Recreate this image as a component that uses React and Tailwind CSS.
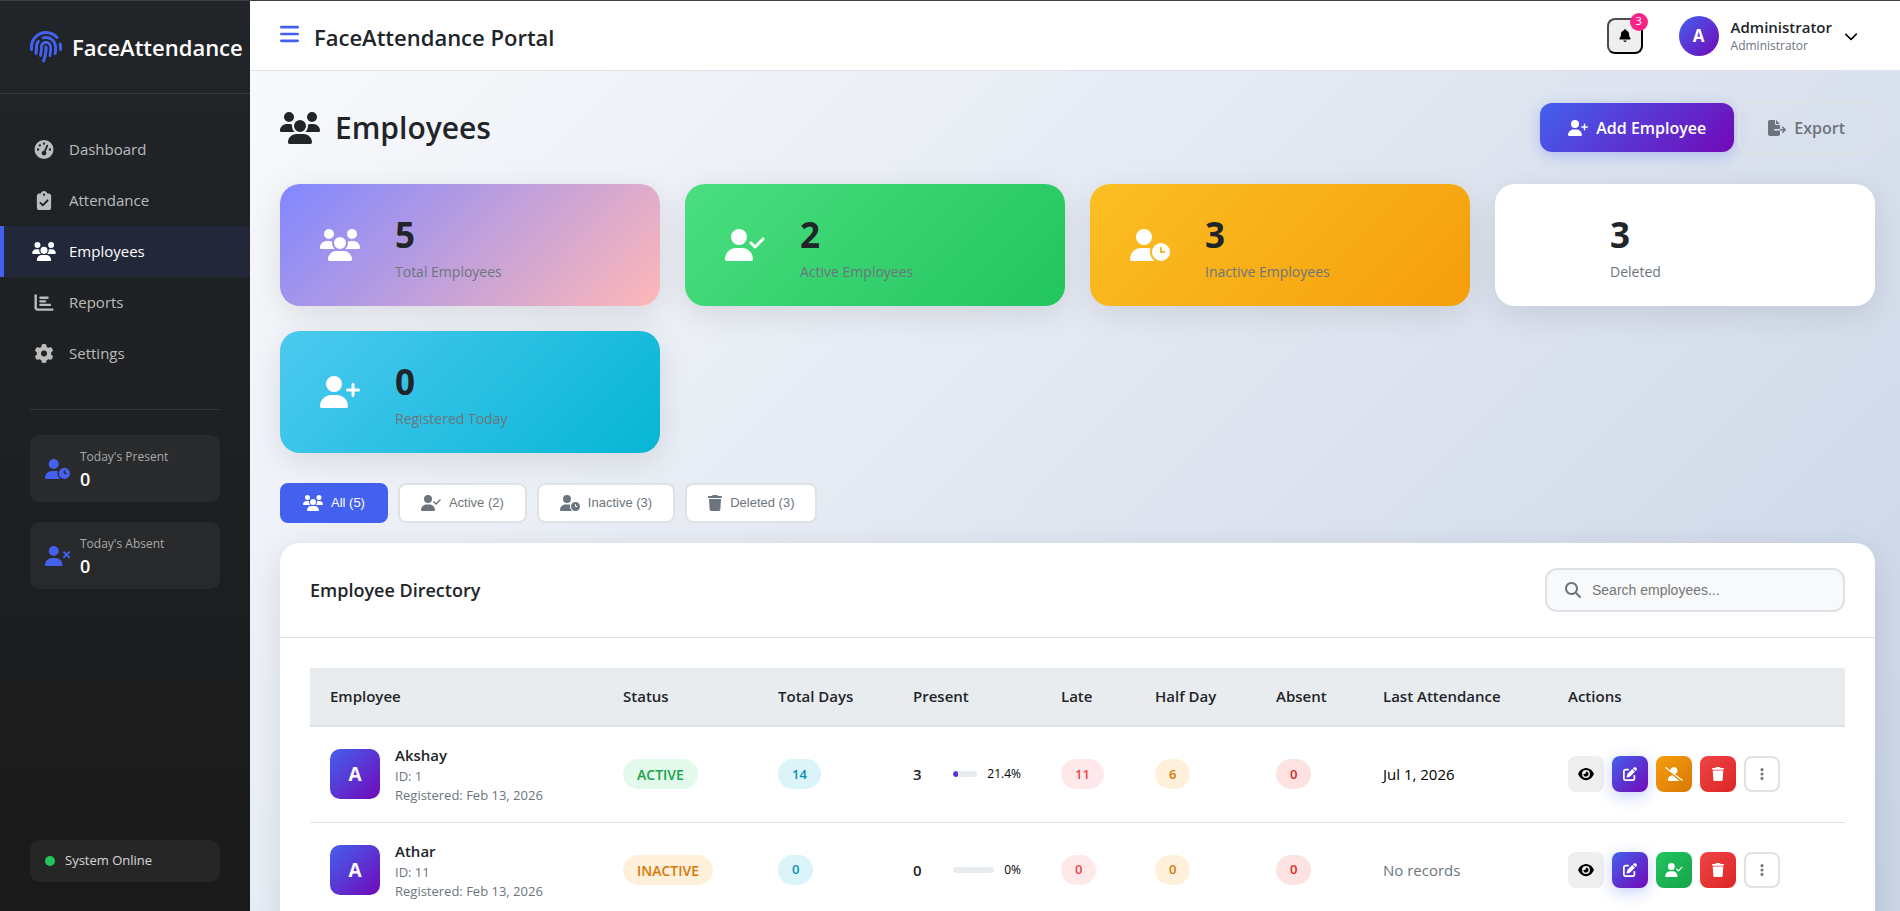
import React from 'react';
import {
  FaBars, FaBell, FaChartBar, FaChevronDown, FaClipboardCheck, FaEllipsisVertical, FaEye,
  FaFileExport, FaFingerprint, FaGaugeHigh, FaGear, FaMagnifyingGlass, FaPenToSquare, FaTrash,
  FaUserCheck, FaUserClock, FaUserPlus, FaUsers, FaUserSlash, FaUserXmark,
} from 'react-icons/fa6';

const navItems = [
  { label: 'Dashboard', Icon: FaGaugeHigh },
  { label: 'Attendance', Icon: FaClipboardCheck },
  { label: 'Employees', Icon: FaUsers, active: true },
  { label: 'Reports', Icon: FaChartBar },
  { label: 'Settings', Icon: FaGear },
];

const sideStats = [
  { label: "Today's Present", value: 0, Icon: FaUserClock },
  { label: "Today's Absent", value: 0, Icon: FaUserXmark },
];

const cards = [
  { label: 'Total Employees', value: 5, Icon: FaUsers, bg: 'bg-[linear-gradient(135deg,#8187ff,#ffb8b8)]' },
  { label: 'Active Employees', value: 2, Icon: FaUserCheck, bg: 'bg-[linear-gradient(135deg,#4ade80,#22c55e)]' },
  { label: 'Inactive Employees', value: 3, Icon: FaUserClock, bg: 'bg-[linear-gradient(135deg,#fbbf24,#f59e0b)]' },
  { label: 'Deleted', value: 3, Icon: FaTrash, bg: 'bg-white' },
  { label: 'Registered Today', value: 0, Icon: FaUserPlus, bg: 'bg-[linear-gradient(135deg,#4cc9f0,#06b6d4)]' },
];

const tabs = [
  { label: 'All (5)', Icon: FaUsers, size: 'h-4 w-5', active: true },
  { label: 'Active (2)', Icon: FaUserCheck, size: 'h-4 w-5' },
  { label: 'Inactive (3)', Icon: FaUserClock, size: 'h-4 w-5' },
  { label: 'Deleted (3)', Icon: FaTrash, size: 'h-4 w-[14px]' },
];

const columns = [
  { label: 'Employee', width: 'w-[293px]' },
  { label: 'Status', width: 'w-[155px]' },
  { label: 'Total Days', width: 'w-[135px]' },
  { label: 'Present', width: 'w-[148px]' },
  { label: 'Late', width: 'w-[94px]' },
  { label: 'Half Day', width: 'w-[121px]' },
  { label: 'Absent', width: 'w-[107px]' },
  { label: 'Last Attendance', width: 'w-[185px]' },
  { label: 'Actions', width: 'w-auto' },
];

const employees = [
  { name: 'Akshay', id: 1, registered: 'Feb 13, 2026', active: true, total: 14, present: 3, rate: 21.4, late: 11, half: 6, absent: 0, last: 'Jul 1, 2026' },
  { name: 'Athar', id: 11, registered: 'Feb 13, 2026', active: false, total: 0, present: 0, rate: 0, late: 0, half: 0, absent: 0, last: null },
];

function Sidebar() {
  return (
    <aside className="flex w-[250px] shrink-0 flex-col bg-linear-to-b from-[#212529] to-[#1a1a1a] text-white">
      <div className="flex h-[93px] shrink-0 items-center gap-[10px] border-b border-white/10 px-[30px]">
        <FaFingerprint className="size-8 shrink-0 text-[#4361ee]" />
        <span className="text-[22px] font-semibold whitespace-nowrap">FaceAttendance</span>
      </div>
      <nav className="flex flex-col py-[30px]">
        {navItems.map(({ label, Icon, active }) => (
          <a
            key={label}
            href="#"
            className={`flex h-[51px] items-center gap-[13px] border-l-4 pl-[28px] text-[15px] ${
              active ? 'border-[#4361ee] bg-[#4361ee]/10 text-white' : 'border-transparent text-white/70'
            }`}
          >
            <Icon className="h-[19px] w-6" />
            {label}
          </a>
        ))}
      </nav>
      <div className="mx-[30px] flex flex-col gap-5 border-t border-white/10 pt-[25px]">
        {sideStats.map(({ label, value, Icon }) => (
          <div key={label} className="flex h-[67px] items-center gap-[10px] rounded-[10px] bg-white/5 px-[15px]">
            <Icon className="h-5 w-[25px] shrink-0 text-[#4361ee]" />
            <div>
              <div className="text-[12px] leading-5 text-white/60">{label}</div>
              <div className="text-[18px] leading-6 font-semibold">{value}</div>
            </div>
          </div>
        ))}
      </div>
      <div className="mx-[30px] mt-auto mb-[29px] flex h-[42px] items-center gap-[10px] rounded-[10px] bg-white/5 px-[15px]">
        <span className="size-[10px] rounded-full bg-[#22c55e]" />
        <span className="text-[13px] text-white/80">System Online</span>
      </div>
    </aside>
  );
}

function Header() {
  return (
    <header className="flex h-[70px] shrink-0 items-center border-b border-[#dee2e6] bg-white pr-[42px] pl-[30px]">
      <div className="flex items-center gap-[15px] pt-1">
        <button type="button" aria-label="Toggle sidebar" className="pb-2 text-[#4361ee]">
          <FaBars className="h-[22px] w-[19px]" />
        </button>
        <span className="text-[22px] font-semibold">FaceAttendance Portal</span>
      </div>
      <button
        type="button"
        aria-label="Notifications, 3 unread"
        className="relative ml-auto flex size-9 items-center justify-center rounded-lg border-2 border-t-[#4c4c4c] border-r-black border-b-black border-l-[#4c4c4c] bg-[#efefef] text-black"
      >
        <FaBell className="h-[13px] w-3" />
        <span className="absolute -top-[7px] -right-[7px] flex size-[18px] items-center justify-center rounded-full bg-[#f72585] text-[11px] text-white">
          3
        </span>
      </button>
      <button type="button" className="ml-9 flex items-center gap-3 text-left">
        <span className="flex size-10 items-center justify-center rounded-full bg-[linear-gradient(135deg,#4361ee,#7209b7)] text-[17px] font-bold text-white">
          A
        </span>
        <span className="flex flex-col">
          <span className="text-[15px] leading-5 font-semibold">Administrator</span>
          <span className="text-[12px] leading-[18px] text-[#6c757d]">Administrator</span>
        </span>
        <FaChevronDown className="h-4 w-[14px] text-black" />
      </button>
    </header>
  );
}

function StatCard({ label, value, Icon, bg }) {
  return (
    <div className={`flex h-[122px] items-center gap-[25px] rounded-[20px] px-[30px] shadow-[0_8px_32px_rgba(0,0,0,0.1)] ${bg}`}>
      <span className="flex w-[60px] justify-center">
        <Icon className="h-8 w-10 text-white" />
      </span>
      <div className="pt-[10px]">
        <div className="text-[35px] leading-[42px] font-bold">{value}</div>
        <div className="mt-0.5 text-[14px] leading-7 text-[#6c757d]">{label}</div>
      </div>
    </div>
  );
}

function Pill({ className, children }) {
  return (
    <span className={`inline-flex h-[30px] items-center rounded-full px-[14px] font-semibold ${className}`}>
      {children}
    </span>
  );
}

function ActionButton({ label, Icon, size = 'size-[14px]', className }) {
  return (
    <button type="button" aria-label={label} className={`flex size-9 items-center justify-center rounded-lg ${className}`}>
      <Icon className={size} />
    </button>
  );
}

function EmployeeRow({ e }) {
  return (
    <tr className="h-24 border-b border-[#dee2e6]">
      <td className="px-5">
        <div className="flex items-center gap-[15px]">
          <span className="flex size-[50px] shrink-0 items-center justify-center rounded-[10px] bg-[linear-gradient(135deg,#4361ee,#7209b7)] text-[19px] font-bold text-white">
            {e.name[0]}
          </span>
          <div>
            <div className="text-[15px] leading-[22px] font-semibold">{e.name}</div>
            <div className="text-[13px] leading-5 text-[#6c757d]">ID: {e.id}</div>
            <div className="text-[13px] leading-[18px] text-[#6c757d]">Registered: {e.registered}</div>
          </div>
        </div>
      </td>
      <td className="px-5">
        {e.active ? (
          <Pill className="bg-[#e3f9eb] text-[14px] text-[#16a34a]">ACTIVE</Pill>
        ) : (
          <Pill className="bg-[#fef0da] text-[14px] text-[#d97706]">INACTIVE</Pill>
        )}
      </td>
      <td className="px-5"><Pill className="bg-[#daf4f9] text-[13px] text-[#0891b2]">{e.total}</Pill></td>
      <td className="px-5">
        <div className="flex items-center gap-[10px]">
          <span className="w-[30px] shrink-0 text-[15px] font-semibold">{e.present}</span>
          <span className="h-[6px] flex-1 overflow-hidden rounded-full bg-[#e9ecef]">
            <span
              className="block h-full rounded-full bg-[linear-gradient(135deg,#4361ee,#7209b7)]"
              style={{ width: `${e.rate}%` }}
            />
          </span>
          <span className="text-[12px] text-black">{e.rate}%</span>
        </div>
      </td>
      <td className="px-5"><Pill className="bg-[#fee8ea] text-[13px] text-[#ef4444]">{e.late}</Pill></td>
      <td className="px-5"><Pill className="bg-[#fef0da] text-[13px] text-[#d97706]">{e.half}</Pill></td>
      <td className="px-5"><Pill className="bg-[#fde2e2] text-[13px] text-[#dc2626]">{e.absent}</Pill></td>
      <td className={`px-5 text-[15px] ${e.last ? 'text-black' : 'text-[#6c757d]'}`}>{e.last || 'No records'}</td>
      <td className="px-5">
        <div className="flex gap-2">
          <ActionButton label="View" Icon={FaEye} size="h-[14px] w-4" className="bg-[#efefef] text-black" />
          <ActionButton label="Edit" Icon={FaPenToSquare} className="bg-[linear-gradient(135deg,#4361ee,#7209b7)] text-white shadow-[0_4px_15px_rgba(67,97,238,0.3)]" />
          {e.active ? (
            <ActionButton label="Deactivate" Icon={FaUserSlash} size="h-[14px] w-[18px]" className="bg-[linear-gradient(135deg,#f59e0b,#d97706)] text-white" />
          ) : (
            <ActionButton label="Activate" Icon={FaUserCheck} size="h-[14px] w-[18px]" className="bg-[linear-gradient(135deg,#22c55e,#16a34a)] text-white" />
          )}
          <ActionButton label="Delete" Icon={FaTrash} className="bg-[linear-gradient(135deg,#ef4444,#dc2626)] text-white" />
          <ActionButton label="More" Icon={FaEllipsisVertical} className="border-2 border-[#dee2e6] bg-white text-[#6c757d]" />
        </div>
      </td>
    </tr>
  );
}

function Directory() {
  return (
    <section className="mt-5 rounded-[20px] bg-white shadow-[0_8px_32px_rgba(0,0,0,0.1)]">
      <div className="flex items-center justify-between border-b border-[#dee2e6] px-[30px] py-[25px]">
        <h2 className="text-[18px] font-semibold">Employee Directory</h2>
        <label className="flex h-11 w-[300px] items-center gap-[11px] rounded-xl border-2 border-[#dee2e6] bg-[#f8f9fa] px-[18px]">
          <FaMagnifyingGlass className="size-4 shrink-0 text-[#6c757d]" />
          <input
            type="text"
            aria-label="Search employees"
            placeholder="Search employees..."
            className="w-full bg-transparent font-['Liberation_Sans',Arial,sans-serif] text-[14px] outline-none placeholder:text-[#757575]"
          />
        </label>
      </div>
      <div className="p-[30px]">
        <table className="w-full table-fixed border-collapse text-left">
          <thead>
            <tr className="h-[58px] border-b-2 border-[#dee2e6] bg-[#e9ecef]">
              {columns.map((c) => (
                <th key={c.label} scope="col" className={`px-5 text-[15px] font-semibold ${c.width}`}>{c.label}</th>
              ))}
            </tr>
          </thead>
          <tbody>
            {employees.map((e) => <EmployeeRow key={e.id} e={e} />)}
          </tbody>
        </table>
      </div>
    </section>
  );
}

export default function App() {
  return (
    <div className="flex h-screen border-t border-[#3c3f41] font-['Open_Sans','Noto_Sans',sans-serif] text-[#212529]">
      <Sidebar />
      <div className="flex min-w-0 flex-1 flex-col">
        <Header />
        <main className="flex-1 overflow-y-auto bg-[linear-gradient(135deg,#f8f9fc,#c9d4e6)] px-[25px] pt-[30px] pl-[30px] [scrollbar-width:none]">
          <div className="flex items-center justify-between">
            <h1 className="flex items-center gap-[15px] text-[30px] font-semibold">
              <FaUsers className="h-8 w-10" />
              Employees
            </h1>
            <div className="flex items-center gap-1">
              <button type="button" className="flex h-[49px] items-center gap-2 rounded-xl bg-[linear-gradient(135deg,#4361ee,#7209b7)] px-7 text-[16px] font-semibold text-white shadow-[0_4px_15px_rgba(67,97,238,0.3)]">
                <FaUserPlus className="h-4 w-5" />
                Add Employee
              </button>
              <button type="button" className="flex h-[53px] items-center gap-2 rounded-xl border-2 border-[#dee2e6] px-7 text-[16px] font-semibold text-[#6c757d]">
                <FaFileExport className="h-4 w-[18px]" />
                Export
              </button>
            </div>
          </div>
          <div className="mt-[30px] grid grid-cols-4 gap-[25px]">
            {cards.map((c) => <StatCard key={c.label} {...c} />)}
          </div>
          <div className="mt-[30px] flex gap-[10px]">
            {tabs.map(({ label, Icon, size, active }) => (
              <button
                key={label}
                type="button"
                className={`flex h-10 items-center gap-2 rounded-lg border-2 px-[21px] font-['Liberation_Sans',Arial,sans-serif] text-[13px] ${
                  active ? 'border-[#4361ee] bg-[#4361ee] text-white' : 'border-[#dee2e6] bg-white text-[#6c757d]'
                }`}
              >
                <Icon className={size} />
                {label}
              </button>
            ))}
          </div>
          <Directory />
        </main>
      </div>
    </div>
  );
}
